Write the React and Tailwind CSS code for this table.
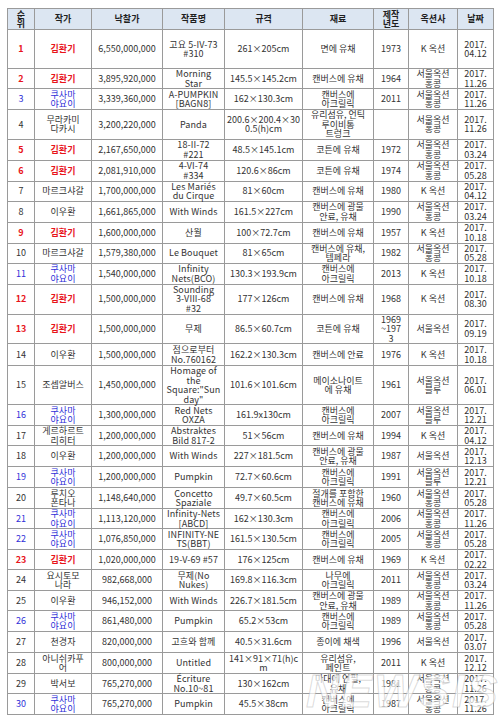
import React from 'react';

// 2017 국내 경매 낙찰가 상위 30
const rows = [
  { r: 1, a: '김환기', p: '6,550,000,000', t: ['고요 5-IV-73', '#310'], s: ['261×205cm'], m: ['면에 유채'], y: ['1973'], au: ['K 옥션'], d: '04.12', h: 'h-[39px]' },
  { r: 2, a: '김환기', p: '3,895,920,000', t: ['Morning', 'Star'], s: ['145.5×145.2cm'], m: ['캔버스에 유채'], y: ['1964'], au: ['서울옥션', '홍콩'], d: '11.26', h: 'h-[20px]' },
  { r: 3, a: ['쿠사마', '야요이'], p: '3,339,360,000', t: ['A-PUMPKIN', '[BAGN8]'], s: ['162×130.3cm'], m: ['캔버스에', '아크릴릭'], y: ['2011'], au: ['서울옥션', '홍콩'], d: '11.26', h: 'h-[21px]' },
  { r: 4, a: ['무라카미', '다카시'], p: '3,200,220,000', t: ['Panda'], s: ['200.6×200.4×30', '0.5(h)cm'], m: ['유리섬유, 언틱', '루이비통', '트렁크'], y: [''], au: ['서울옥션', '홍콩'], d: '11.26', h: 'h-[29px]' },
  { r: 5, a: '김환기', p: '2,167,650,000', t: ['18-II-72', '#221'], s: ['48.5×145.1cm'], m: ['코튼에 유채'], y: ['1972'], au: ['서울옥션', '홍콩'], d: '03.24', h: 'h-[21px]' },
  { r: 6, a: '김환기', p: '2,081,910,000', t: ['4-VI-74', '#334'], s: ['120.6×86cm'], m: ['코튼에 유채'], y: ['1974'], au: ['서울옥션', '홍콩'], d: '05.28', h: 'h-[21px]' },
  { r: 7, a: '마르크샤갈', p: '1,700,000,000', t: ['Les Mariés', 'du Cirque'], s: ['81×60cm'], m: ['캔버스에 유채'], y: ['1980'], au: ['K 옥션'], d: '04.12', h: 'h-[20px]' },
  { r: 8, a: '이우환', p: '1,661,865,000', t: ['With Winds'], s: ['161.5×227cm'], m: ['캔버스에 광물', '안료, 유채'], y: ['1990'], au: ['서울옥션', '홍콩'], d: '03.24', h: 'h-[21px]' },
  { r: 9, a: '김환기', p: '1,600,000,000', t: ['산월'], s: ['100×72.7cm'], m: ['캔버스에 유채'], y: ['1957'], au: ['K 옥션'], d: '10.18', h: 'h-[21px]' },
  { r: 10, a: '마르크샤갈', p: '1,579,380,000', t: ['Le Bouquet'], s: ['81×65cm'], m: ['캔버스에 유채,', '템페라'], y: ['1982'], au: ['서울옥션', '홍콩'], d: '05.28', h: 'h-[20px]' },
  { r: 11, a: ['쿠사마', '야요이'], p: '1,540,000,000', t: ['Infinity', 'Nets(BCO)'], s: ['130.3×193.9cm'], m: ['캔버스에', '아크릴릭'], y: ['2013'], au: ['K 옥션'], d: '10.18', h: 'h-[21px]' },
  { r: 12, a: '김환기', p: '1,500,000,000', t: ['Sounding', '3-VIII-68', '#32'], s: ['177×126cm'], m: ['캔버스에 유채'], y: ['1968'], au: ['K 옥션'], d: '08.30', h: 'h-[30px]' },
  { r: 13, a: '김환기', p: '1,500,000,000', t: ['무제'], s: ['86.5×60.7cm'], m: ['코튼에 유채'], y: ['1969', '~197', '3'], au: ['서울옥션'], d: '09.19', h: 'h-[29px]' },
  { r: 14, a: '이우환', p: '1,500,000,000', t: ['점으로부터', 'No.760162'], s: ['162.2×130.3cm'], m: ['캔버스에 안료'], y: ['1976'], au: ['K 옥션'], d: '10.18', h: 'h-[22px]' },
  { r: 15, a: '조셉알버스', p: '1,450,000,000', t: ['Homage of', 'the', 'Square:"Sun', 'day"'], s: ['101.6×101.6cm'], m: ['메이소나이트', '에 유채'], y: ['1961'], au: ['서울옥션', '블루'], d: '06.01', h: 'h-[38px]' },
  { r: 16, a: ['쿠사마', '야요이'], p: '1,300,000,000', t: ['Red Nets', 'OXZA'], s: ['161.9x130cm'], m: ['캔버스에', '아크릴릭'], y: ['2007'], au: ['서울옥션', '블루'], d: '12.21', h: 'h-[21px]' },
  { r: 17, a: ['게르하르트', '리히터'], p: '1,200,000,000', t: ['Abstraktes', 'Bild 817-2'], s: ['51×56cm'], m: ['캔버스에 유채'], y: ['1994'], au: ['K 옥션'], d: '04.12', h: 'h-[20px]' },
  { r: 18, a: '이우환', p: '1,200,000,000', t: ['With Winds'], s: ['227×181.5cm'], m: ['캔버스에 광물', '안료, 유채'], y: ['1987'], au: ['서울옥션'], d: '12.13', h: 'h-[21px]' },
  { r: 19, a: ['쿠사마', '야요이'], p: '1,200,000,000', t: ['Pumpkin'], s: ['72.7×60.6cm'], m: ['캔버스에', '아크릴릭'], y: ['1991'], au: ['서울옥션', '블루'], d: '12.21', h: 'h-[21px]' },
  { r: 20, a: ['루치오', '폰타나'], p: '1,148,640,000', t: ['Concetto', 'Spaziale'], s: ['49.7×60.5cm'], m: ['절개를 포함한', '캔버스에 유채'], y: ['1960'], au: ['서울옥션', '홍콩'], d: '05.28', h: 'h-[21px]' },
  { r: 21, a: ['쿠사마', '야요이'], p: '1,113,120,000', t: ['Infinity-Nets', '[ABCD]'], s: ['162×130.3cm'], m: ['캔버스에', '아크릴릭'], y: ['2006'], au: ['서울옥션', '홍콩'], d: '11.26', h: 'h-[20px]' },
  { r: 22, a: ['쿠사마', '야요이'], p: '1,076,850,000', t: ['INFINITY-NE', 'TS(BBT)'], s: ['161.5×130.5cm'], m: ['캔버스에', '아크릴릭'], y: ['2005'], au: ['서울옥션', '홍콩'], d: '05.28', h: 'h-[21px]' },
  { r: 23, a: '김환기', p: '1,020,000,000', t: ['19-V-69 #57'], s: ['176×125cm'], m: ['캔버스에 유채'], y: ['1969'], au: ['K 옥션'], d: '02.22', h: 'h-[20px]' },
  { r: 24, a: ['요시토모', '나라'], p: '982,668,000', t: ['무제(No', 'Nukes)'], s: ['169.8×116.3cm'], m: ['나무에', '아크릴릭'], y: ['2011'], au: ['서울옥션', '홍콩'], d: '03.24', h: 'h-[21px]' },
  { r: 25, a: '이우환', p: '946,152,000', t: ['With Winds'], s: ['226.7×181.5cm'], m: ['캔버스에 광물', '안료, 유채'], y: ['1989'], au: ['서울옥션', '홍콩'], d: '11.26', h: 'h-[20px]' },
  { r: 26, a: ['쿠사마', '야요이'], p: '861,480,000', t: ['Pumpkin'], s: ['65.2×53cm'], m: ['캔버스에', '아크릴릭'], y: ['1989'], au: ['서울옥션', '홍콩'], d: '05.28', h: 'h-[21px]' },
  { r: 27, a: '천경자', p: '820,000,000', t: ['고흐와 함께'], s: ['40.5×31.6cm'], m: ['종이에 채색'], y: ['1996'], au: ['서울옥션'], d: '03.07', h: 'h-[21px]' },
  { r: 28, a: ['아니쉬카푸', '어'], p: '800,000,000', t: ['Untitled'], s: ['141×91×71(h)c', 'm'], m: ['유리섬유,', '페인트'], y: ['2011'], au: ['K 옥션'], d: '12.12', h: 'h-[21px]' },
  { r: 29, a: '박서보', p: '765,270,000', t: ['Écriture', 'No.10~81'], s: ['130×162cm'], m: ['마대에 연필,', '유채'], y: ['1981'], au: ['서울옥션', '홍콩'], d: '11.26', h: 'h-[20px]' },
  { r: 30, a: ['쿠사마', '야요이'], p: '765,270,000', t: ['Pumpkin'], s: ['45.5×38cm'], m: ['캔버스에', '아크릴릭'], y: ['1987'], au: ['서울옥션', '홍콩'], d: '11.26', h: 'h-[21px]' },
];

const Lines = ({ items }) => {
  const list = Array.isArray(items) ? items : [items];
  return list.map((txt, i) => (
    <React.Fragment key={i}>
      {i > 0 && <br />}
      {txt}
    </React.Fragment>
  ));
};

const artistTone = (a) => {
  const name = Array.isArray(a) ? a[0] : a;
  if (name === '김환기') return 'text-[#e8131b] font-bold';
  if (name === '쿠사마') return 'text-[#2f2fd8]';
  return 'text-[#333333]';
};

const cell = 'border border-[#9a9a9a] text-center align-middle px-0 py-0 leading-[9.5px] whitespace-nowrap';

const App = () => {
  return (
    <div
      className="relative w-[500px] h-[721px] bg-white pt-2 pl-[7px] overflow-hidden"
      style={{ fontFamily: '"Noto Sans CJK KR", "Noto Sans", sans-serif' }}
    >
      <table className="table-fixed border-collapse w-[486px] text-[9px] text-[#333333]">
        <colgroup>
          <col className="w-[27px]" />
          <col className="w-[57px]" />
          <col className="w-[71px]" />
          <col className="w-[62px]" />
          <col className="w-[78px]" />
          <col className="w-[71px]" />
          <col className="w-[35px]" />
          <col className="w-[49px]" />
          <col className="w-[36px]" />
        </colgroup>
        <thead>
          <tr className="h-[21px] bg-[#dce6f2] text-[#1f1f1f] font-bold">
            <th className={cell}>순<br />위</th>
            <th className={cell}>작가</th>
            <th className={cell}>낙찰가</th>
            <th className={cell}>작품명</th>
            <th className={cell}>규격</th>
            <th className={cell}>재료</th>
            <th className={cell}>제작<br />년도</th>
            <th className={cell}>옥션사</th>
            <th className={cell}>날짜</th>
          </tr>
        </thead>
        <tbody>
          {rows.map((row) => {
            const tone = artistTone(row.a);
            return (
              <tr key={row.r} className={row.h}>
                <td className={`${cell} ${tone}`}>{row.r}</td>
                <td className={`${cell} ${tone}`}><Lines items={row.a} /></td>
                <td className={cell}>{row.p}</td>
                <td className={`${cell} tracking-[0.1px]`}><Lines items={row.t} /></td>
                <td className={cell}><Lines items={row.s} /></td>
                <td className={cell}><Lines items={row.m} /></td>
                <td className={cell}><Lines items={row.y} /></td>
                <td className={cell}><Lines items={row.au} /></td>
                <td className={cell}>2017.<br />{row.d}</td>
              </tr>
            );
          })}
        </tbody>
      </table>

      {/* NEWSIS 워터마크 */}
      <div
        className="absolute left-[306px] top-[668px] text-[46px] font-black italic tracking-[2px] text-white/70 leading-none pointer-events-none"
        style={{ fontFamily: '"Liberation Sans", Arial, sans-serif', WebkitTextStroke: '1px rgba(150,150,150,0.35)' }}
      >
        NEWSIS
      </div>
    </div>
  );
};

export default App;
